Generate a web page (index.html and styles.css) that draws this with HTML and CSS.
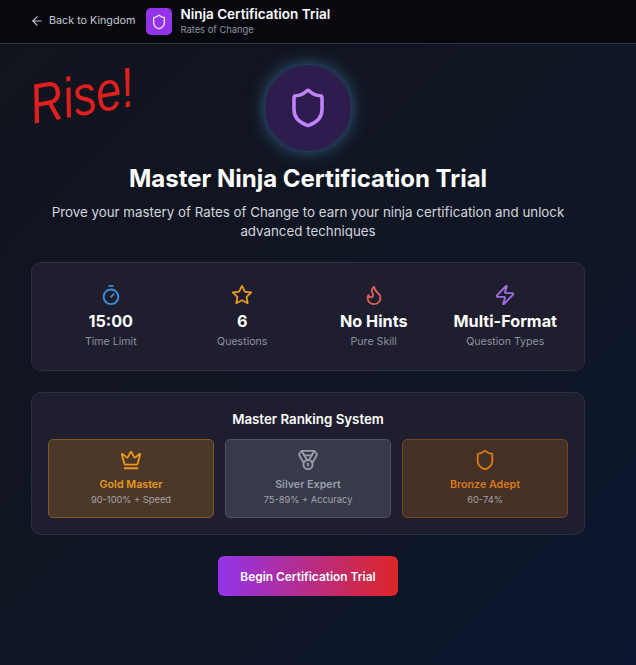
FILE: index.html
```html
<!DOCTYPE html>
<html lang="en">
<head>
    <meta charset="UTF-8">
    <meta name="viewport" content="width=device-width, initial-scale=1.0">
    <title>Ninja Certification Trial</title>
    <link rel="stylesheet" href="styles.css">
</head>
<body>
    <svg class="icon-defs" width="0" height="0">
        <symbol id="i-shield" viewBox="0 0 24 24"><path d="M20 13c0 5-3.5 7.5-7.66 8.95a1 1 0 0 1-.67-.01C7.5 20.5 4 18 4 13V6a1 1 0 0 1 1-1c2 0 4.5-1.2 6.24-2.72a1.17 1.17 0 0 1 1.52 0C14.51 3.81 17 5 19 5a1 1 0 0 1 1 1z"/></symbol>
    </svg>
    <header class="topbar">
        <a class="back">
            <svg class="icon back-icon" viewBox="0 0 24 24"><path d="m12 19-7-7 7-7"/><path d="M19 12H5"/></svg>
            Back to Kingdom
        </a>
        <div class="topbar-badge"><svg class="icon badge-icon"><use href="#i-shield"/></svg></div>
        <div class="topbar-text">
            <div class="topbar-title">Ninja Certification Trial</div>
            <div class="topbar-sub">Rates of Change</div>
        </div>
    </header>

    <div class="scribble">Rise!</div>

    <main class="page">
        <div class="hero-circle"><svg class="icon hero-icon"><use href="#i-shield"/></svg></div>
        <h1>Master Ninja Certification Trial</h1>
        <p class="lead">Prove your mastery of Rates of Change to earn your ninja certification and unlock advanced techniques</p>

        <section class="card stats">
            <div class="stat">
                <svg class="icon blue" viewBox="0 0 24 24"><line x1="10" x2="14" y1="2" y2="2"/><line x1="12" x2="15" y1="14" y2="11"/><circle cx="12" cy="14" r="8"/></svg>
                <div class="stat-value">15:00</div>
                <div class="stat-label">Time Limit</div>
            </div>
            <div class="stat">
                <svg class="icon amber" viewBox="0 0 24 24"><polygon points="12 2 15.09 8.26 22 9.27 17 14.14 18.18 21.02 12 17.77 5.82 21.02 7 14.14 2 9.27 8.91 8.26 12 2"/></svg>
                <div class="stat-value">6</div>
                <div class="stat-label">Questions</div>
            </div>
            <div class="stat">
                <svg class="icon red" viewBox="0 0 24 24"><path d="M8.5 14.5A2.5 2.5 0 0 0 11 12c0-1.38-.5-2-1-3-1.072-2.143-.224-4.054 2-6 .5 2.5 2 4.9 4 6.5 2 1.6 3 3.5 3 5.5a7 7 0 1 1-14 0c0-1.153.433-2.294 1-3a2.5 2.5 0 0 0 2.5 2.5z"/></svg>
                <div class="stat-value">No Hints</div>
                <div class="stat-label">Pure Skill</div>
            </div>
            <div class="stat">
                <svg class="icon purple" viewBox="0 0 24 24"><path d="M4 14a1 1 0 0 1-.78-1.63l9.9-10.2a.5.5 0 0 1 .86.46l-1.92 6.02A1 1 0 0 0 13 10h7a1 1 0 0 1 .78 1.63l-9.9 10.2a.5.5 0 0 1-.86-.46l1.92-6.02A1 1 0 0 0 11 14z"/></svg>
                <div class="stat-value">Multi-Format</div>
                <div class="stat-label">Question Types</div>
            </div>
        </section>

        <section class="card ranking">
            <h2>Master Ranking System</h2>
            <div class="tiers">
                <div class="tier tier-gold">
                    <svg class="icon" viewBox="0 0 24 24"><path d="M11.562 3.266a.5.5 0 0 1 .876 0L15.39 8.87a1 1 0 0 0 1.516.294L21.183 5.5a.5.5 0 0 1 .798.519l-2.834 10.246a1 1 0 0 1-.956.734H5.81a1 1 0 0 1-.957-.734L2.02 6.02a.5.5 0 0 1 .798-.519l4.276 3.664a1 1 0 0 0 1.516-.294z"/><path d="M5 21h14"/></svg>
                    <div class="tier-name">Gold Master</div>
                    <div class="tier-note">90-100% + Speed</div>
                </div>
                <div class="tier tier-silver">
                    <svg class="icon" viewBox="0 0 24 24"><path d="M7.21 15 2.66 7.14a2 2 0 0 1 .13-2.2L4.4 2.8A2 2 0 0 1 6 2h12a2 2 0 0 1 1.6.8l1.6 2.14a2 2 0 0 1 .14 2.2L16.79 15"/><path d="M11 12 5.12 2.2"/><path d="m13 12 5.88-9.8"/><path d="M8 7h8"/><circle cx="12" cy="17" r="5"/><path d="M12 18v-2h-.5"/></svg>
                    <div class="tier-name">Silver Expert</div>
                    <div class="tier-note">75-89% + Accuracy</div>
                </div>
                <div class="tier tier-bronze">
                    <svg class="icon"><use href="#i-shield"/></svg>
                    <div class="tier-name">Bronze Adept</div>
                    <div class="tier-note">60-74%</div>
                </div>
            </div>
        </section>

        <button class="btn">Begin Certification Trial</button>
    </main>
</body>
</html>
```

FILE: styles.css
```css
* {
    box-sizing: border-box;
}
html, body {
    height: 100%;
}
body {
    margin: 0;
    position: relative;
    overflow: hidden;
    font-family: Inter, "Noto Sans", sans-serif;
    color: #fff;
    background: linear-gradient(135deg, #12141d 0%, #101624 55%, #0c1630 100%);
}
.icon-defs {
    position: absolute;
}
.icon {
    display: block;
    width: 22px;
    height: 22px;
    fill: none;
    stroke: currentColor;
    stroke-width: 2;
    stroke-linecap: round;
    stroke-linejoin: round;
}
.topbar {
    display: flex;
    align-items: center;
    height: 44px;
    padding-left: 30px;
    background: #08090e;
    border-bottom: 1px solid #2c3645;
}
.back {
    display: flex;
    align-items: center;
    gap: 5px;
    margin: -2px 11px 0 0;
    font-size: 10.75px;
    color: #c3c8d0;
}
.back-icon {
    width: 14px;
    height: 14px;
}
.topbar-badge {
    display: flex;
    align-items: center;
    justify-content: center;
    width: 26px;
    height: 27px;
    margin-right: 8px;
    border-radius: 5px;
    background: #9333ea;
}
.badge-icon {
    width: 16px;
    height: 16px;
    color: #f0e6fb;
}
.topbar-text {
    margin-top: -2px;
}
.topbar-title {
    font-size: 13.5px;
    font-weight: 600;
    line-height: 18px;
}
.topbar-sub {
    font-size: 9.4px;
    line-height: 14px;
    color: #8d94a0;
}
.scribble {
    position: absolute;
    left: 18px;
    top: 56px;
    font-family: "Liberation Sans", sans-serif;
    font-style: italic;
    font-size: 56px;
    line-height: 80px;
    color: #e0201f;
    transform: rotate(-10deg) scaleX(0.82);
}
.page {
    display: flex;
    flex-direction: column;
    align-items: center;
    width: 554px;
    margin-left: 31px;
    padding-top: 21px;
}
.hero-circle {
    display: flex;
    align-items: center;
    justify-content: center;
    width: 86px;
    height: 86px;
    border-radius: 50%;
    background: #2e1c4f;
    box-shadow: 0 0 18px rgba(90, 170, 230, 0.55);
    color: #c084fc;
}
.hero-icon {
    width: 42px;
    height: 42px;
}
h1 {
    margin: 12px 0 0;
    font-size: 24px;
    line-height: 32px;
    font-weight: 700;
}
.lead {
    width: 530px;
    margin: 8px 0 0;
    font-size: 13.33px;
    line-height: 19px;
    text-align: center;
    color: #d3d6de;
}
.card {
    width: 100%;
    border: 1px solid #2a3040;
    border-radius: 10px;
    background: #1e1e2e;
}
.stats {
    display: grid;
    grid-template-columns: repeat(4, 1fr);
    height: 109px;
    margin-top: 21px;
    padding: 21px 13px 0;
}
.stat {
    display: flex;
    flex-direction: column;
    align-items: center;
}
.stat-value {
    margin-top: 3px;
    font-size: 16.2px;
    font-weight: 700;
    line-height: 24px;
}
.stat-label {
    margin-top: 1px;
    font-size: 10.6px;
    line-height: 15px;
    color: #8e92a0;
}
.blue { color: #3f8fd6; }
.amber { color: #e8981c; }
.red { color: #e0605c; }
.purple { color: #a06fe6; }
.ranking {
    height: 143px;
    margin-top: 21px;
    padding: 16px 16px 0;
}
h2 {
    margin: 0;
    font-size: 13.3px;
    font-weight: 600;
    line-height: 20px;
    text-align: center;
}
.tiers {
    display: grid;
    grid-template-columns: repeat(3, 1fr);
    gap: 11px;
    margin-top: 10px;
}
.tier {
    display: flex;
    flex-direction: column;
    align-items: center;
    height: 79px;
    padding-top: 9px;
    border: 1px solid;
    border-radius: 5px;
}
.tier-name {
    margin-top: 6px;
    font-size: 10.7px;
    font-weight: 600;
    line-height: 16px;
}
.tier-note {
    font-size: 9.3px;
    line-height: 14px;
    color: #a3a3a8;
}
.tier-gold {
    background: #4c3828;
    border-color: #7e5a2a;
    color: #e8981c;
}
.tier-silver {
    background: #383a4a;
    border-color: #505462;
    color: #9a9ea8;
}
.tier-bronze {
    background: #443026;
    border-color: #6f4522;
    color: #d97a14;
}
.btn {
    width: 180px;
    height: 40px;
    margin-top: 21px;
    border: none;
    border-radius: 6px;
    background: linear-gradient(90deg, #9333ea, #dc2626);
    color: #fff;
    font-family: inherit;
    font-size: 11.9px;
    font-weight: 600;
}
```
